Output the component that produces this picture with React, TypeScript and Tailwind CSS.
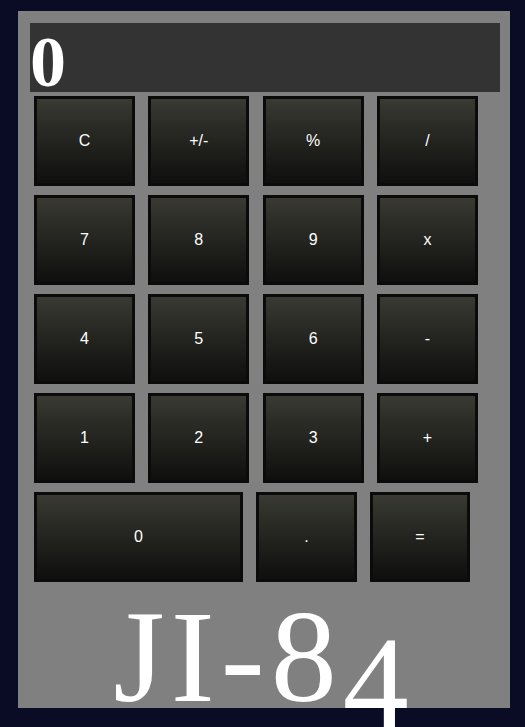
import React from "react"

const rows = [
  ["C", "+/-", "%", "/"],
  ["7", "8", "9", "x"],
  ["4", "5", "6", "-"],
  ["1", "2", "3", "+"],
]

function Key({ label, className = "w-[101px]" }: { label: string; className?: string }) {
  return (
    <button
      className={`${className} h-[90px] border-[3px] border-[#0b0b0b] bg-gradient-to-b from-[#3a3a33] to-[#0f0f0e] text-white text-[16px] font-['Liberation_Sans',Arial,sans-serif] flex items-center justify-center`}
    >
      {label}
    </button>
  )
}

export default function App() {
  return (
    <main className="min-h-screen bg-[#0a0b24] pt-[11px] pl-[18px] overflow-hidden">
      <div className="w-[492px] h-[697px] bg-[#808080] pt-[12px] pl-[12px]">
        {/* readout */}
        <div className="w-[470px] h-[69px] bg-[#333333] pt-[3px] text-white text-[72px] leading-none font-bold font-['Liberation_Serif','Times_New_Roman',serif]">
          0
        </div>

        {/* keypad */}
        <div className="pl-[4px] pt-[4px] flex flex-col gap-[9px]">
          {rows.map((row, i) => (
            <div key={i} className="flex gap-[13.3px]">
              {row.map((k) => (
                <Key key={k} label={k} />
              ))}
            </div>
          ))}
          <div className="flex gap-[13px]">
            <Key label="0" className="w-[209px]" />
            <Key label="." />
            <Key label="=" className="w-[100px]" />
          </div>
        </div>

        {/* model name */}
        <h1 className="-ml-[12px] mt-[9px] text-center text-white text-[132px] leading-none tracking-[6px] font-normal font-['Liberation_Serif','Times_New_Roman',serif] whitespace-nowrap">
          JI-8<span className="inline-block translate-y-[26px]">4</span>
        </h1>
      </div>
    </main>
  )
}
